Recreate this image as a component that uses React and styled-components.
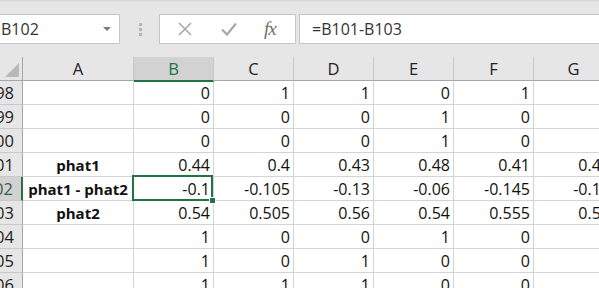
import React from "react";
import styled, { createGlobalStyle } from "styled-components";

const GlobalStyle = createGlobalStyle`
  html, body {
    margin: 0;
    padding: 0;
    background: #ffffff;
    overflow: hidden;
  }
  body {
    font-family: "Open Sans", "Noto Sans", sans-serif;
  }
`;

const GREEN = "#217346";

const Page = styled.div`
  width: 599px;
  height: 288px;
  overflow: hidden;
  background: #e6e6e6;
`;

const FormulaBar = styled.div`
  display: flex;
  align-items: stretch;
  height: 30px;
  padding: 13px 0 13px 0;
  border-top: 1px solid #d6d6d6;
`;

const NameBox = styled.div`
  display: flex;
  align-items: center;
  justify-content: space-between;
  width: 120px;
  box-sizing: border-box;
  background: #fff;
  border: 1px solid #c6c6c6;
  border-left: none;
  padding: 0 8px 0 1px;
  font-size: 16px;
  color: #333;
`;

const Arrow = styled.span`
  width: 0;
  height: 0;
  border-left: 4px solid transparent;
  border-right: 4px solid transparent;
  border-top: 4px solid #7a7a7a;
`;

const Grip = styled.div`
  width: 38px;
  display: flex;
  flex-direction: column;
  align-items: center;
  justify-content: center;
  gap: 2px;
  padding-left: 1px;
  span {
    width: 3px;
    height: 3px;
    background: #b4b4b4;
  }
`;

const Buttons = styled.div`
  display: flex;
  align-items: center;
  justify-content: space-around;
  width: 137px;
  box-sizing: border-box;
  background: #fff;
  border: 1px solid #c6c6c6;
  padding: 0 6px 0 4px;
`;

const Fx = styled.span`
  font-family: "Liberation Serif", "DejaVu Serif", serif;
  font-style: italic;
  font-size: 19px;
  color: #6e6e6e;
  letter-spacing: -1px;
`;

const FormulaInput = styled.div`
  flex: 1;
  margin-left: 3px;
  display: flex;
  align-items: center;
  background: #fff;
  border: 1px solid #c6c6c6;
  border-right: none;
  padding-left: 12px;
  font-size: 16px;
  color: #333;
`;

const Grid = styled.div`
  display: grid;
  grid-template-columns: 23px 111px repeat(6, 80px);
  grid-auto-rows: 24px;
  width: 720px;
`;

const HeaderCell = styled.div`
  position: relative;
  box-sizing: border-box;
  display: flex;
  align-items: center;
  justify-content: center;
  background: ${(p) => (p.$active ? "#d2d2d2" : "#e6e6e6")};
  color: ${(p) => (p.$active ? GREEN : "#222")};
  border-right: 1px solid #c8c8c8;
  border-bottom: ${(p) => (p.$active ? `2px solid ${GREEN}` : "1px solid #a6a6a6")};
  margin-bottom: ${(p) => (p.$active ? "-1px" : "0")};
  z-index: ${(p) => (p.$active ? 1 : 0)};
  font-size: 16.5px;
`;

const Corner = styled.div`
  box-sizing: border-box;
  background: #e6e6e6;
  border-right: 1px solid #a6a6a6;
  border-bottom: 1px solid #a6a6a6;
  display: flex;
  align-items: flex-end;
  justify-content: flex-end;
  padding: 0 3px 3px 0;
  &::after {
    content: "";
    width: 0;
    height: 0;
    border-left: 14px solid transparent;
    border-bottom: 14px solid #b8b8b8;
  }
`;

const RowHeader = styled.div`
  box-sizing: border-box;
  display: flex;
  align-items: center;
  justify-content: flex-end;
  overflow: hidden;
  white-space: nowrap;
  padding-right: 8px;
  background: ${(p) => (p.$active ? "#d2d2d2" : "#e6e6e6")};
  color: ${(p) => (p.$active ? "#3b5a48" : "#222")};
  border-right: ${(p) => (p.$active ? `2px solid ${GREEN}` : "1px solid #a6a6a6")};
  border-bottom: 1px solid #c8c8c8;
  font-size: 16.5px;
`;

const Cell = styled.div`
  position: relative;
  box-sizing: border-box;
  display: flex;
  align-items: center;
  justify-content: ${(p) => (p.$label ? "center" : "flex-end")};
  white-space: nowrap;
  padding-right: ${(p) => (p.$label ? "0" : "3px")};
  background: #fff;
  border-right: 1px solid #d4d4d4;
  border-bottom: 1px solid #d4d4d4;
  font-size: ${(p) => (p.$label ? "15px" : "16px")};
  font-weight: ${(p) => (p.$label ? 700 : 400)};
  color: #111;
`;

const Selection = styled.div`
  position: absolute;
  top: -2px;
  left: -2px;
  right: 0;
  bottom: -1px;
  border: 2px solid ${GREEN};
  pointer-events: none;
  z-index: 2;
`;

const FillHandle = styled.div`
  position: absolute;
  right: -5px;
  bottom: -5px;
  width: 5px;
  height: 5px;
  background: ${GREEN};
  border: 1px solid #fff;
`;

const cols = ["A", "B", "C", "D", "E", "F", "G"];

const rows = [
  { n: 98, a: "", v: ["0", "1", "1", "0", "1", ""] },
  { n: 99, a: "", v: ["0", "0", "0", "1", "0", ""] },
  { n: 100, a: "", v: ["0", "0", "0", "1", "0", ""] },
  { n: 101, a: "phat1", v: ["0.44", "0.4", "0.43", "0.48", "0.41", "0.45"] },
  { n: 102, a: "phat1 - phat2", v: ["-0.1", "-0.105", "-0.13", "-0.06", "-0.145", "-0.11"] },
  { n: 103, a: "phat2", v: ["0.54", "0.505", "0.56", "0.54", "0.555", "0.56"] },
  { n: 104, a: "", v: ["1", "0", "0", "1", "0", ""] },
  { n: 105, a: "", v: ["1", "0", "1", "0", "0", ""] },
  { n: 106, a: "", v: ["1", "1", "1", "0", "0", ""] },
];

export default function App() {
  return (
    <>
      <GlobalStyle />
      <Page>
        <FormulaBar>
          <NameBox>
            B102
            <Arrow />
          </NameBox>
          <Grip>
            <span />
            <span />
            <span />
          </Grip>
          <Buttons>
            <svg width="16" height="16" viewBox="0 0 16 16">
              <path d="M2 2 L14 14 M14 2 L2 14" stroke="#a8a8a8" strokeWidth="1.6" fill="none" />
            </svg>
            <svg width="18" height="16" viewBox="0 0 18 16">
              <path d="M2 8.5 L7 13.5 L16 2.5" stroke="#a8a8a8" strokeWidth="2.2" fill="none" />
            </svg>
            <Fx>fx</Fx>
          </Buttons>
          <FormulaInput>=B101-B103</FormulaInput>
        </FormulaBar>
        <Grid>
          <Corner />
          {cols.map((c) => (
            <HeaderCell key={c} $active={c === "B"}>
              {c}
            </HeaderCell>
          ))}
          {rows.map((r) => (
            <React.Fragment key={r.n}>
              <RowHeader $active={r.n === 102}>{r.n}</RowHeader>
              <Cell $label>{r.a}</Cell>
              {r.v.map((val, i) => (
                <Cell key={i}>
                  {val}
                  {r.n === 102 && i === 0 && (
                    <Selection>
                      <FillHandle />
                    </Selection>
                  )}
                </Cell>
              ))}
            </React.Fragment>
          ))}
        </Grid>
      </Page>
    </>
  );
}
